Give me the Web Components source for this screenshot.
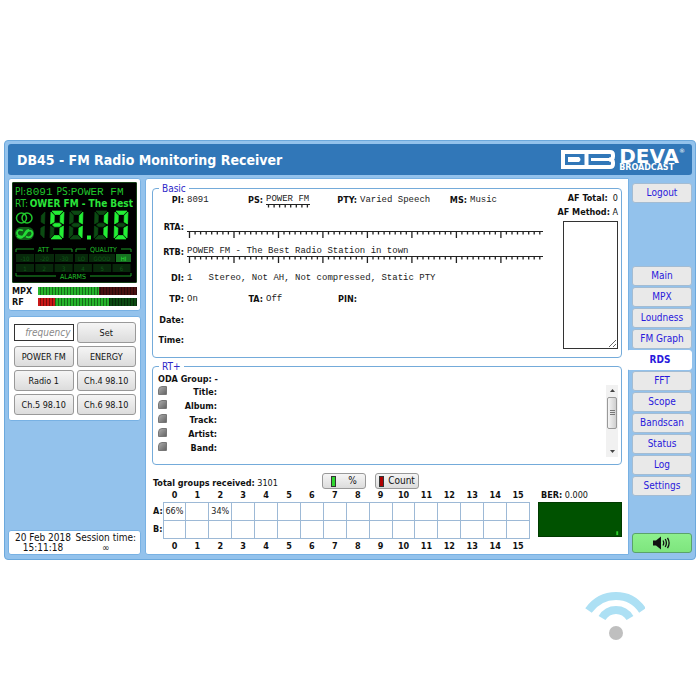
<!DOCTYPE html>
<html lang="en">
<head>
<meta charset="utf-8">
<title>DB45 - FM Radio Monitoring Receiver</title>
<style>
  body { margin: 0; background: #fff; color: #111; font: 10px/12px "DejaVu Sans Condensed", "Noto Sans", sans-serif; }
</style>
</head>
<body>
<receiver-app></receiver-app>
<script>
const define = (name, html, setup) => {
  const template = document.createElement('template');
  template.innerHTML = '<style>*{box-sizing:border-box}</style>' + html;
  customElements.define(name, class extends HTMLElement {
    connectedCallback() {
      if (this.shadowRoot) return;
      const root = this.attachShadow({ mode: 'open' });
      root.append(template.content.cloneNode(true));
      if (setup) setup(this, root);
    }
  });
};

define('ui-panel', `
<style>
  :host { display: block; box-sizing: border-box; background: #fff; border: 1px solid #78b1e3; border-radius: 3px; }
</style><slot></slot>`);

define('app-header', `
<style>
  :host { display: flex; align-items: center; justify-content: space-between; height: 31px; padding: 0 7px 0 9px; background: #3177b8; border-radius: 3px; color: #fff; }
  h1 { margin: 0; font-size: 14px; line-height: 18px; }
  .logo { display: flex; gap: 4px; align-items: center; }
  .name { font-family: "DejaVu Sans", sans-serif; font-weight: bold; display: grid; }
  .deva { font-size: 20px; line-height: 16px; display: flex; }
  sup { font-size: 6px; line-height: 6px; font-weight: normal; }
  .cast { font-size: 8px; line-height: 8px; }
</style>
<h1>DB45 - FM Radio Monitoring Receiver</h1>
<div class="logo">
  <svg width="54" height="19" viewBox="0 0 54 19" fill="none" stroke="#fff" stroke-width="4">
    <path d="M2 2H25.500V17H2Z"/><path d="M7 7H18Q21 9.500 18 12H7Z" fill="#fff" stroke="none"/>
    <path d="M25.500 2H49Q52 2 52 5V6.500Q52 9.500 48 9.500Q52 9.500 52 12.500V14Q52 17 49 17H25.500"/>
    <path d="M30 9.500H49" stroke-width="3"/>
  </svg>
  <div class="name"><span class="deva">DEVA<sup>®</sup></span><span class="cast">BROADCAST</span></div>
</div>`);

define('lcd-display', `
<style>
  :host { display: block; background: #000; border: 1px solid #174017; color: #20c52c; height: 101px; border-radius: 1px; padding: 3px 3px 0 2px; }
  .row { display: flex; align-items: center; height: 12px; font-size: 10px; white-space: pre; }
  code { font: 11px/12px "Liberation Mono", monospace; }
  .ps { margin-left: 4px; }
  .tag { margin-right: 2px; }
  .scroll { flex: 1; min-width: 0; overflow: hidden; display: flex; justify-content: flex-end; font-weight: bold; color: #2be53a; }
  svg { display: block; width: 100%; }
  text { font-family: "DejaVu Sans Condensed", sans-serif; }
</style>
<div class="row"><span>PI:</span><code>8091</code><span class="ps">PS:</span><code>POWER FM</code></div>
<div class="row"><span class="tag">RT:</span><div class="scroll"><span>POWER FM - The Best</span></div></div>
<svg viewBox="0 0 118 72"></svg>`, (el, root) => {
  const seg = { a: 'M2 0H13L10 3.500H5Z', b: 'M14 1V13L10.500 11V4.500Z', c: 'M14 15V27L10.500 23.500V17Z',
    d: 'M5 24.500H10L13 28H2Z', e: 'M1 15L4.500 17V23.500L1 27Z', f: 'M1 1L4.500 4.500V11L1 13Z', g: 'M3 14L5 12.200H10L12 14L10 15.800H5Z' };
  const digit = (x, on, all = 'abcdefg') => `<g transform="translate(${x} 1) skewX(-2)">` +
    [...all].map(s => { const c = on.includes(s) ? '#23ef35' : '#0b4a12'; return `<path d="${seg[s]}" fill="${c}" stroke="${c}" stroke-width=".7"/>`; }).join('') + '</g>';
  const text = (x, y, t, c, s = 7) => `<text x="${x}" y="${y}" fill="${c}" font-size="${s}" text-anchor="middle">${t}</text>`;
  let s = `<g fill="none" stroke="#20c52c" stroke-width="1.500"><circle cx="6.500" cy="8" r="5"/><circle cx="12" cy="8" r="5"/></g>
    <rect x="0" y="17" width="19" height="13" rx="6" fill="#115c19"/>
    <path d="M8 20.500Q3 18.500 2 22.500Q2 26 6 26.500Q9 27 11 23.500Q13 19.500 16.500 21Q18.500 23.500 16.500 26Q14 28.500 11 26.500M2 26Q5 29.500 8 26.500L11 21.500Q12 20 14 20" fill="none" stroke="#24dc36" stroke-width="1.800"/>`;
  s += digit(16, '', 'bc') + digit(35, 'abcdfg') + digit(54, 'bc') + '<rect x="72" y="25.500" width="4" height="4" fill="#23ef35"/>' + digit(79, 'bc') + digit(99, 'abcdef');
  s += `<path d="M1 42V39H19M38 39H57V42M61 42V39H71M106 39H116V42M1 63V66H41M75 66H116V63" fill="none" stroke="#1c9c27"/>`;
  s += text(28.500, 41.500, 'ATT', '#20c52c') + text(88.500, 41.500, 'QUALITY', '#20c52c') + text(58, 69, 'ALARMS', '#20c52c');
  ['-10', '-20', '-30', 'LO', 'GOOD', 'HI'].forEach((t, i) => {
    const x = [1, 20, 40, 60, 74, 101][i], w = [18, 19, 18, 13, 26, 15][i];
    s += `<rect x="${x}" y="44" width="${w}" height="8" fill="${i == 5 ? '#177321' : '#08290b'}"/>` + text(x + w / 2, 50.500, t, i == 5 ? '#2be53a' : '#0f5a18', 6);
    s += `<rect x="${1 + i * 19.300}" y="54" width="18" height="8" fill="#08290b"/>` + text(10 + i * 19.300, 60.500, i + 1, '#0f5a18', 6);
  });
  root.querySelector('svg').innerHTML = s;
});

define('level-meter', `
<style>
  :host { display: flex; align-items: center; height: 11px; font-weight: bold; font-size: 9px; }
  span { width: 26px; }
  .bar { flex: 1; height: 8px; background: repeating-linear-gradient(90deg, transparent 0 2px, #0006 2px 3px), var(--levels); }
</style>
<span><slot></slot></span><div class="bar" role="meter"></div>`);

define('ui-button', `
<style>
  :host { display: grid; }
  button { display: flex; align-items: center; justify-content: center; gap: var(--gap, 0); width: 100%; height: var(--h, 21px); padding: 0 3px; border: 1px solid #999; border-radius: 3px; background: linear-gradient(#f5f5f5, #dcdcdc); font: var(--size, 9px)/12px "DejaVu Sans Condensed", sans-serif; color: #111; white-space: nowrap; }
</style><button type="button"><slot name="icon"></slot><slot></slot></button>`);

define('preset-pad', `
<style>
  :host { display: grid; grid-template-columns: 1fr 1fr; gap: 3px; padding: 5px 4px 5px 5px; align-items: center; }
  input { width: 100%; height: 17px; margin: 0; padding: 0 2px; border: 1px solid #333; border-radius: 0; text-align: right; font: italic 10px "DejaVu Sans Condensed", sans-serif; }
  input::placeholder { color: #888; }
</style>
<input type="text" placeholder="frequency" aria-label="Frequency"><ui-button>Set</ui-button>
<ui-button>POWER FM</ui-button><ui-button>ENERGY</ui-button>
<ui-button>Radio 1</ui-button><ui-button>Ch.4 98.10</ui-button>
<ui-button>Ch.5 98.10</ui-button><ui-button>Ch.6 98.10</ui-button>`);

define('nav-link', `
<style>
  :host { display: block; }
  a { display: block; height: 20px; line-height: 18px; border: 1px solid #a3bcd3; border-radius: 3px; background: #e9e9e9; color: #2818dc; text-align: center; text-decoration: none; }
  :host([current]) { margin-left: -4px; }
  :host([current]) a { border-color: #fff; background: #fff; font-weight: bold; border-radius: 0 3px 3px 0; }
</style><a href="#"><slot></slot></a>`);

define('side-nav', `
<style>
  :host { display: flex; flex-direction: column; gap: 1px; padding: 5px 0 2px; }
  .menu { display: grid; gap: 1px; margin-top: 62px; }
  button { margin-top: auto; height: 20px; padding: 0; border: 1px solid #5aa36a; border-radius: 3px; background: linear-gradient(#8df08d, #7ee57e); display: grid; place-items: center; }
</style>
<nav-link>Logout</nav-link>
<nav class="menu"></nav>
<button type="button" aria-label="Sound">
  <svg width="18" height="14" viewBox="0 0 18 14"><path d="M0 4.500H3L8 0.500V13.500L3 9.500H0Z" fill="#111"/><path d="M10 4.500Q11.500 7 10 9.500M12.200 3Q14.600 7 12.200 11M14.500 1.800Q17.700 7 14.500 12.200" fill="none" stroke="#111" stroke-width="1.300"/></svg>
</button>`, (el, root) => {
  root.querySelector('.menu').innerHTML = ['Main', 'MPX', 'Loudness', 'FM Graph', 'RDS', 'FFT', 'Scope', 'Bandscan', 'Status', 'Log', 'Settings']
    .map(t => `<nav-link${t == 'RDS' ? ' current' : ''}>${t}</nav-link>`).join('');
});

define('field-box', `
<style>
  :host { display: block; }
  fieldset { margin: 0; min-width: 0; padding: 0; border: 1px solid #74abda; border-radius: 4px; }
  legend { margin-left: 6px; padding: 0 3px; line-height: 11px; color: #2d28c8; }
</style><fieldset><legend><slot name="title"></slot></legend><slot></slot></fieldset>`);

define('char-ruler', `
<style>
  :host { display: block; white-space: nowrap; font: 9px/10px "Liberation Mono", monospace; color: #222; }
  div { height: 10px; }
  svg { display: block; }
</style><div><slot></slot></div><svg height="7"></svg>`, (el, root) => {
  const n = +el.getAttribute('chars'), major = el.hasAttribute('major'), step = 5.56, w = Math.round(n * step);
  const svg = root.querySelector('svg');
  svg.setAttribute('width', w);
  let d = '';
  for (let i = 0; i < n; i++) d += `M${(2.5 + i * step).toFixed(1)} 1v${major && i % 8 == 0 ? 6 : 2.500}`;
  svg.innerHTML = `<path d="M0 .5H${w}" stroke="#222"/><path d="${d}" stroke="#222" stroke-width="1.300"/>`;
});

define('rds-basic', `
<style>
  :host { display: flex; padding: 0 3px 8px 0; }
  dl { flex: 1; min-width: 0; margin: 0; display: grid; grid-template-columns: 31px 50px 23px 64px 24px 84px 20px 1fr; column-gap: 3px; grid-template-rows: 27px 25px 26px 21px 21px 20px 12px; font-size: 9px; white-space: nowrap; }
  dt { font-weight: bold; justify-self: end; }
  .first { grid-column-start: 1; }
  dd { margin: 0; min-width: 0; font: 9px/12px "Liberation Mono", monospace; color: #222; }
  .wide { grid-column: 2 / -1; white-space: pre; }
  .af { display: flex; flex-direction: column; align-items: flex-end; width: 64px; white-space: nowrap; font-size: 9px; line-height: 14px; margin-top: -3px; }
  textarea { width: 55px; height: 128px; margin: 2px 0 0; border: 1px solid #333; padding: 0; background: #fff; }
</style>
<dl>
  <dt class="first">PI:</dt><dd>8091</dd><dt>PS:</dt><dd><char-ruler chars="8">POWER FM</char-ruler></dd><dt>PTY:</dt><dd>Varied Speech</dd><dt>MS:</dt><dd>Music</dd>
  <dt class="first">RTA:</dt><dd class="wide"><char-ruler chars="64" major></char-ruler></dd>
  <dt class="first">RTB:</dt><dd class="wide"><char-ruler chars="64" major>POWER FM - The Best Radio Station in town</char-ruler></dd>
  <dt class="first">DI:</dt><dd class="wide">1   Stereo, Not AH, Not compressed, Static PTY</dd>
  <dt class="first">TP:</dt><dd>On</dd><dt>TA:</dt><dd>Off</dd><dt>PIN:</dt><dd></dd>
  <dt class="first">Date:</dt><dd class="wide"></dd>
  <dt class="first">Time:</dt><dd class="wide"></dd>
</dl>
<div class="af"><div><b>AF Total:</b>&nbsp; 0</div><div><b>AF Method:</b> A</div><textarea aria-label="AF list"></textarea></div>`);

define('rt-plus', `
<style>
  :host { display: grid; grid-template-columns: 1fr 12px; padding: 2px 3px 7px 5px; font-size: 9px; font-weight: bold; }
  .oda { grid-column: 1 / -1; line-height: 11px; }
  ul { margin: 0; padding: 0; list-style: none; }
  li { height: 14px; display: grid; grid-template-columns: 9px 50px; line-height: 14px; }
  li span { text-align: right; }
  i { width: 9px; height: 9px; margin-top: 1px; background: linear-gradient(135deg, #aaa, #666); border: 1px solid #777; border-top-left-radius: 4px; }
  .bar { height: 72px; background: #f1f1f1; display: flex; flex-direction: column; align-items: center; justify-content: space-between; padding: 4px 1px; }
  .thumb { width: 10px; height: 32px; margin: 5px 0 auto; border: 1px solid #999; border-radius: 2px; background: linear-gradient(90deg, #f5f5f5, #cfcfcf); display: grid; place-items: center; }
</style>
<div class="oda">ODA Group: -</div>
<ul id="list"><li><i></i><span>Title:</span></li><li><i></i><span>Album:</span></li><li><i></i><span>Track:</span></li><li><i></i><span>Artist:</span></li><li><i></i><span>Band:</span></li></ul>
<div class="bar" role="scrollbar" aria-label="RT+ list" aria-controls="list" aria-valuenow="0">
  <svg width="5" height="3"><path d="M0 3L2.500 0L5 3Z" fill="#444"/></svg>
  <div class="thumb"><svg width="5" height="6"><path d="M0 .5H5M0 2.500H5M0 4.500H5" stroke="#777"/></svg></div>
  <svg width="5" height="3"><path d="M0 0L2.500 3L5 0Z" fill="#444"/></svg>
</div>`);

define('group-stats', `
<style>
  :host { display: grid; grid-template-columns: minmax(0, 1fr) 84px; column-gap: 8px; padding-left: 1px; font-size: 9px; }
  .top { grid-column: 1 / -1; display: grid; grid-template-columns: 160px 44px 44px; column-gap: 9px; height: 16px; --h: 16px; --size: 10px; white-space: nowrap; }
  .top > span { padding-top: 4px; }
  .percent { --gap: 12px; }
  .count { --gap: 4px; }
  .led { width: 5px; height: 11px; border: 1px solid #333; background: #2fd62f; }
  .led.red { background: #b00000; }
  table { border-collapse: collapse; table-layout: fixed; width: 100%; margin-top: 1px; }
  th { padding: 0; height: 12px; line-height: 11px; }
  th:first-child, td:first-child { width: 10px; }
  tbody th { text-align: left; }
  td { height: 18px; padding: 0; border: 1px solid #9db9d6; text-align: center; color: #222; }
  tfoot th { height: 13px; padding-top: 2px; }
  .ber div { padding-left: 3px; line-height: 12px; }
  .ber svg { display: block; width: 100%; height: 35px; background: #005200; border: 1px solid #003a00; margin-top: 1px; }
</style>
<div class="top"><span><b>Total groups received:</b> 3101</span>
  <ui-button class="percent"><span slot="icon" class="led"></span>%</ui-button>
  <ui-button class="count"><span slot="icon" class="led red"></span>Count</ui-button></div>
<table></table>
<div class="ber"><div><b>BER:</b> 0.000</div><svg viewBox="0 0 84 35" preserveAspectRatio="xMaxYMax meet"><path d="M79 30h2v4h-2z" fill="#29d129"/></svg></div>`, (el, root) => {
  const cols = [...Array(16).keys()], heads = '<tr><th></th>' + cols.map(i => `<th>${i}</th>`).join('') + '</tr>';
  const row = (n, v) => `<tr><th>${n}:</th>` + cols.map(i => `<td>${v[i] || ''}</td>`).join('') + '</tr>';
  root.querySelector('table').innerHTML = `<thead>${heads}</thead><tbody>${row('A', { 0: '66%', 2: '34%' })}${row('B', {})}</tbody><tfoot>${heads}</tfoot>`;
});

define('session-info', `
<style>
  :host { display: flex; justify-content: space-between; padding: 2px 4px 0 6px; height: 23px; line-height: 10px; text-align: center; white-space: nowrap; }
</style><div>20 Feb 2018<br>15:11:18</div><div>Session time:<br>∞</div>`);

define('wifi-mark', `
<style>:host { display: block; } svg { display: block; }</style>
<svg width="60" height="50" viewBox="0 0 60 50" fill="none" stroke="#ade0f4" stroke-width="8">
  <path d="M3.500 19.500Q14 5 31 5Q48 5 57.500 19.500"/><path d="M17 27Q22 19 31 19Q40 19 45 27"/>
  <circle cx="31" cy="42" r="7" fill="#bfbfbf" stroke="none"/>
</svg>`);

define('receiver-app', `
<style>
  :host { display: block; padding: 140px 4px 0; }
  .frame { border: 1px solid #6ba8dc; border-radius: 4px; background: #93c2ec; padding: 3px 3px 4px; }
  .cols { display: grid; grid-template-columns: 133px minmax(0, 1fr) 60px; margin-top: 3px; }
  aside { display: flex; flex-direction: column; gap: 5px; }
  .signal { padding: 3px; }
  .signal level-meter:first-of-type { margin-top: 2px; }
  .session { margin-top: auto; }
  main { margin: 0 3px 0 4px; display: grid; }
  .main { padding: 4px 6px 2px; border-radius: 3px 0 0 3px; }
  .basic { margin-bottom: 3px; }
  group-stats { margin-top: 8px; }
  wifi-mark { width: 60px; margin: 31px 51px 0 auto; }
</style>
<div class="frame">
  <app-header></app-header>
  <div class="cols">
    <aside>
      <ui-panel class="signal">
        <lcd-display></lcd-display>
        <level-meter style="--levels:linear-gradient(90deg,#25b52b 62%,#4a1010 62%)">MPX</level-meter>
        <level-meter style="--levels:linear-gradient(90deg,#c81818 17%,#25b52b 17% 72%,#0b4a12 72%)">RF</level-meter>
      </ui-panel>
      <ui-panel><preset-pad></preset-pad></ui-panel>
      <ui-panel class="session"><session-info></session-info></ui-panel>
    </aside>
    <main><ui-panel class="main">
      <field-box class="basic"><span slot="title">Basic</span><rds-basic></rds-basic></field-box>
      <field-box><span slot="title">RT+</span><rt-plus></rt-plus></field-box>
      <group-stats></group-stats>
    </ui-panel></main>
    <side-nav></side-nav>
  </div>
</div>
<wifi-mark></wifi-mark>`);
</script>
</body>
</html>
